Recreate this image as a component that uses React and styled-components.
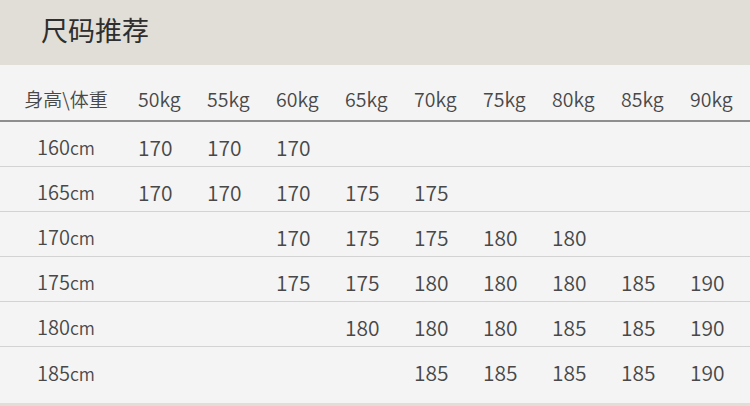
import React from 'react';
import styled, { createGlobalStyle } from 'styled-components';

const colors = {
  band: '#e1ddd7',
  page: '#f4f4f4',
  text: '#484848',
  title: '#2e2e2e',
  rule: '#d3d3d3',
  headRule: '#8e8e8e'
};

const GlobalStyle = createGlobalStyle`
  html, body {
    margin: 0;
    padding: 0;
    background: ${colors.page};
  }
  body {
    font-family: "Noto Sans CJK SC", "Noto Sans", sans-serif;
    font-weight: 350;
    color: ${colors.text};
  }
`;

const Page = styled.div`
  width: 750px;
  height: 406px;
  box-sizing: border-box;
  border-bottom: 3px solid ${colors.band};
  background: ${colors.page};
  overflow: hidden;
`;

const TitleBar = styled.header`
  height: 65px;
  background: ${colors.band};
  display: flex;
  align-items: center;
  padding-left: 41px;
  box-sizing: border-box;

  h1 {
    margin: 0;
    font-size: 27px;
    font-weight: 400;
    color: ${colors.title};
    transform: translateY(-3px);
  }
`;

const Row = styled.div`
  display: flex;
  align-items: center;
  padding-left: 22px;
  box-sizing: border-box;
  height: ${props => props.head ? '57px' : '45px'};
  padding-top: ${props => props.head ? '11px' : '5px'};
  border-bottom: ${props => props.last ? 'none' : props.head ? `2px solid ${colors.headRule}` : `1px solid ${colors.rule}`};
`;

const Label = styled.div`
  flex: 0 0 88px;
  margin-right: 28px;
  text-align: center;
  font-size: ${props => props.head ? '19px' : '20px'};
  white-space: nowrap;

  small {
    font-size: 17.5px;
  }
`;

const Cell = styled.div`
  flex: 0 0 69px;
  font-size: ${props => props.head ? '19.5px' : '21px'};
  white-space: nowrap;
`;

const weights = [50, 55, 60, 65, 70, 75, 80, 85, 90];

const sizes = [
  { height: 160, values: [170, 170, 170] },
  { height: 165, values: [170, 170, 170, 175, 175] },
  { height: 170, values: [null, null, 170, 175, 175, 180, 180] },
  { height: 175, values: [null, null, 175, 175, 180, 180, 180, 185, 190] },
  { height: 180, values: [null, null, null, 180, 180, 180, 185, 185, 190] },
  { height: 185, values: [null, null, null, null, 185, 185, 185, 185, 190] }
];

export default function App() {
  return (
    <Page>
      <GlobalStyle />
      <TitleBar>
        <h1>尺码推荐</h1>
      </TitleBar>
      <Row head>
        <Label head>身高\体重</Label>
        {weights.map(w => (
          <Cell head key={w}>{w}kg</Cell>
        ))}
      </Row>
      {sizes.map((s, i) => (
        <Row key={s.height} last={i === sizes.length - 1}>
          <Label>{s.height}<small>cm</small></Label>
          {weights.map((w, j) => (
            <Cell key={w}>{s.values[j] || ''}</Cell>
          ))}
        </Row>
      ))}
    </Page>
  );
}
